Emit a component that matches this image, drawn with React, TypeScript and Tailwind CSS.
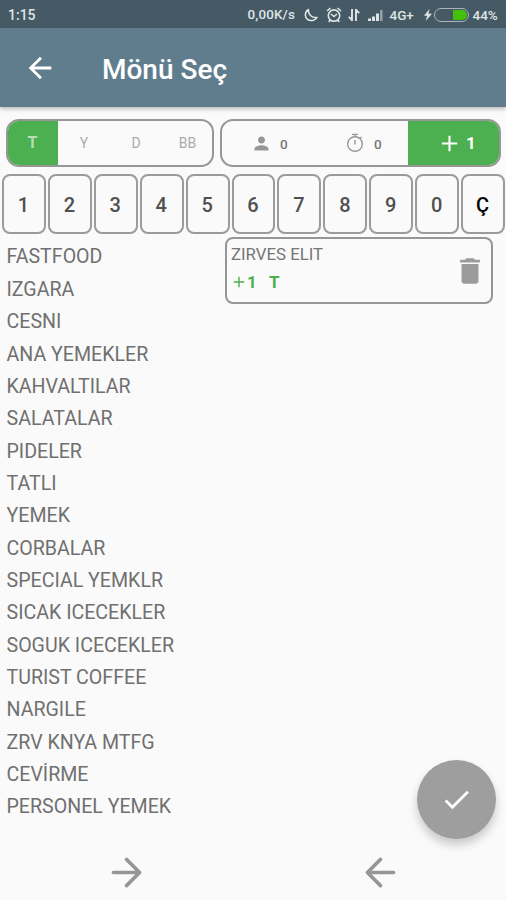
import type { ReactNode } from "react";

const categories = [
  "FASTFOOD", "IZGARA", "CESNI", "ANA YEMEKLER", "KAHVALTILAR", "SALATALAR",
  "PIDELER", "TATLI", "YEMEK", "CORBALAR", "SPECIAL YEMKLR", "SICAK ICECEKLER",
  "SOGUK ICECEKLER", "TURIST COFFEE", "NARGILE", "ZRV KNYA MTFG", "CEVİRME",
  "PERSONEL YEMEK",
];

const keys = ["1", "2", "3", "4", "5", "6", "7", "8", "9", "0", "Ç"];

function Icon({ className, children }: { className: string; children: ReactNode }) {
  return (
    <svg viewBox="0 0 24 24" fill="currentColor" className={`block shrink-0 ${className}`}>
      {children}
    </svg>
  );
}

function StatusBar() {
  return (
    <div className="flex h-7 items-center bg-[#455a64] pl-[8px] pr-[8px] pt-[2px] text-[13.5px] font-medium text-[#dfe5e7]">
      <span className="w-[239.500px] shrink-0 text-[14px]">1:15</span>
      <span className="w-[56px] shrink-0 text-[13.400px] tracking-[0.150px] whitespace-nowrap">0,00K/s</span>
      <svg viewBox="0 0 14 14" className="h-[14px] w-[14px] shrink-0" fill="none" stroke="currentColor" strokeWidth="1.500" strokeLinejoin="round">
        <path d="M4.500 1.500C.8 3.500.3 9 3.400 11.400C6.500 13.700 11.300 12.500 13 9.400C8.500 10.500 3.800 6.500 4.500 1.500Z" />
      </svg>
      <svg viewBox="0 0 16 16" className="ml-[8px] h-4 w-4 shrink-0" fill="none" stroke="currentColor" strokeWidth="1.600">
        <circle cx="8" cy="8.600" r="5.700" />
        <path d="M1 4L4.500 1M15 4L11.500 1M5 7L8 9.500L11 7M4 13L2.800 15M12 13l1.200 2" />
      </svg>
      <svg viewBox="0 0 12 14" className="ml-[6px] h-[14px] w-[12px] shrink-0" fill="none" stroke="currentColor" strokeWidth="1.900">
        <path d="M4 1v12M4.500 12.500L.8 8.800M8 13V1M7.500 1.500l3.700 3.700" />
      </svg>
      <svg viewBox="0 0 15 12" className="ml-[8px] h-[12px] w-[15px] shrink-0" fill="currentColor">
        <path d="M0 9.500h3v2.500H0zM4 7.500h3v4.500H4zM8 4.500h3v7.500H8z" />
        <path d="M12 1h2.600v11H12z" opacity=".5" />
      </svg>
      <span className="ml-[7px] w-[34px] shrink-0 text-[13.500px]">4G+</span>
      <svg viewBox="0 0 8 12" className="h-[12px] w-[8px] shrink-0" fill="currentColor">
        <path d="M5.500 0L0 6.800h3.200L1.700 12L8 4.800H4.500z" />
      </svg>
      <div className="ml-[2px] flex h-[14px] w-[35px] shrink-0 justify-end rounded-full border-[1.500px] border-[#a9b5ba] p-px">
        <div className="w-[14px] rounded-r-full rounded-l-[2px] bg-[#43c20b]" />
      </div>
      <span className="ml-[4px] text-[13.500px]">44%</span>
    </div>
  );
}

function Toolbar() {
  return (
    <header className="relative flex h-[79px] items-center bg-[#607d8e] pl-[23px] pt-px text-white shadow-[0_2px_4px_rgba(0,0,0,0.25)]">
      <Icon className="h-[34px] w-[34px]">
        <path d="M20 11H7.830l5.590-5.590L12 4l-8 8 8 8 1.410-1.410L7.830 13H20v-2z" />
      </Icon>
      <h1 className="ml-[45px] pt-[4px] text-[28px] font-medium">Mönü Seç</h1>
    </header>
  );
}

function Selectors() {
  return (
    <div className="flex gap-[6px] pl-[6px] pt-[12px]">
      <div className="flex h-[48px] w-[208px] overflow-hidden rounded-[13px] border-2 border-[#969696] text-[14px] text-[#aaa]">
        <div className="flex w-[50px] items-center justify-center bg-[#4caf50] pr-px text-[16px] font-bold text-[#b5dfb7]">T</div>
        <div className="flex w-[52px] items-center justify-center pt-px">Y</div>
        <div className="flex w-[52px] items-center justify-center pt-px">D</div>
        <div className="flex w-[50px] items-center justify-center pl-px pt-px">BB</div>
      </div>
      <div className="flex h-[48px] w-[281px] overflow-hidden rounded-[13px] border-2 border-[#969696] text-[14px] font-medium text-[#777]">
        <div className="flex w-[93px] items-center pl-[29px]">
          <Icon className="h-[21px] w-[21px] text-[#969696]">
            <path d="M12 12c2.210 0 4-1.790 4-4s-1.790-4-4-4-4 1.790-4 4 1.790 4 4 4zm0 2c-2.670 0-8 1.340-8 4v2h16v-2c0-2.660-5.330-4-8-4z" />
          </Icon>
          <span className="ml-[8px] pt-[2px] text-[13.500px]">0</span>
        </div>
        <div className="flex w-[93px] items-center pl-[30px]">
          <svg viewBox="0 0 20 20" className="h-5 w-5" fill="none" stroke="#969696" strokeWidth="1.400">
            <circle cx="10" cy="11" r="7.300" />
            <path d="M7 1.400h6M10 1.500v2M15 5.500l1.500-1.500M10 7v4.500" />
          </svg>
          <span className="ml-[9px] pt-[2px] text-[13.500px]">0</span>
        </div>
        <div className="flex flex-1 items-center bg-[#4caf50] pl-[30px] text-white">
          <Icon className="h-[23px] w-[23px]">
            <path d="M20 13.100h-6.900V20h-2.200v-6.900H4v-2.200h6.900V4h2.200v6.900H20z" />
          </Icon>
          <span className="ml-[5px] pt-[2px] text-[17px] font-bold">1</span>
        </div>
      </div>
    </div>
  );
}

function KeyRow() {
  return (
    <div className="mt-[7px] grid grid-cols-11 gap-[2px] pl-[2px] pr-px">
      {keys.map((k) => (
        <button
          key={k}
          className={`flex h-[60px] items-center justify-center rounded-[8px] border-2 border-[#9b9b9b] pt-px pr-px text-[20px] font-medium ${k === "Ç" ? "text-black" : "text-[#505050]"}`}
        >
          {k}
        </button>
      ))}
    </div>
  );
}

function OrderCard() {
  return (
    <div className="mt-[3px] flex h-[67px] w-[268px] items-center justify-between rounded-[8px] border-2 border-[#969696] pl-[4px] pr-[4px]">
      <div className="flex h-full flex-col pt-[5px]">
        <span className="text-[16.800px] leading-[21px] text-[#757575]">ZIRVES ELIT</span>
        <div className="mt-[6px] flex items-center text-[17px] leading-[22px] font-bold text-[#4caf50]">
          <Icon className="ml-px h-[14px] w-[14px]">
            <path d="M21 13.200h-7.800V21h-2.400v-7.800H3v-2.400h7.800V3h2.400v7.800H21z" />
          </Icon>
          <span className="w-[23px] pl-px">1</span>
          <span>T</span>
        </div>
      </div>
      <Icon className="h-[34px] w-[34px] text-[#9b9b9b]">
        <path d="M6 19c0 1.100.9 2 2 2h8c1.100 0 2-.9 2-2V7H6v12zM19 4h-3.500l-1-1h-5l-1 1H5v2h14V4z" />
      </Icon>
    </div>
  );
}

function BottomArrow({ back = false }: { back?: boolean }) {
  return (
    <div className="flex flex-1 justify-center">
      <svg viewBox="0 0 24 24" className={`h-[45px] w-[45px] ${back ? "ml-[2px] rotate-180" : ""}`} fill="none" stroke="#969696" strokeWidth="1.900" strokeLinecap="round" strokeLinejoin="round">
        <path d="M5 12h14M12 5l7 7-7 7" />
      </svg>
    </div>
  );
}

export default function App() {
  return (
    <div className="relative flex h-[900px] w-[506px] flex-col overflow-hidden bg-[#fafafa] font-['Roboto',sans-serif]">
      <StatusBar />
      <Toolbar />
      <Selectors />
      <KeyRow />
      <main className="flex flex-1">
        <ul className="w-[225px] pl-[6.500px] pt-[7px]">
          {categories.map((c) => (
            <li key={c} className="flex h-[32.350px] items-center text-[19.600px] whitespace-nowrap text-[#707070]">
              {c}
            </li>
          ))}
        </ul>
        <OrderCard />
      </main>
      <nav className="flex h-[55px] items-center">
        <BottomArrow />
        <BottomArrow back />
      </nav>
      <button className="absolute top-[760px] left-[417px] flex h-[79px] w-[79px] items-center justify-center rounded-full bg-[#9e9e9e] text-white shadow-[0_6px_10px_rgba(0,0,0,0.2)]">
        <Icon className="h-[33px] w-[33px]">
          <path d="M9 16.170L4.830 12l-1.420 1.410L9 19 21 7l-1.410-1.410z" />
        </Icon>
      </button>
    </div>
  );
}
